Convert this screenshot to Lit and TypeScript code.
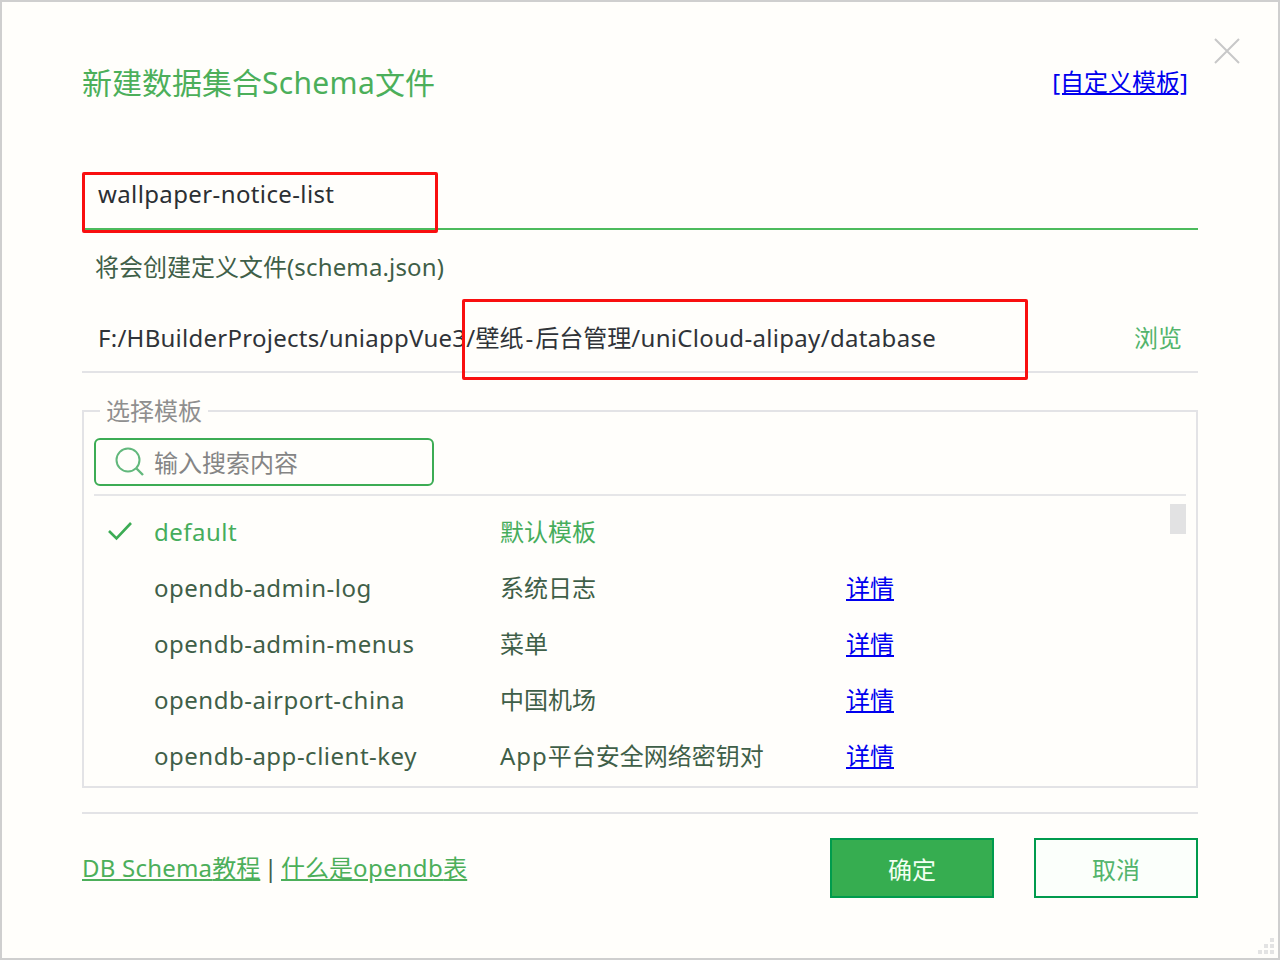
import { LitElement, html, css, svg } from "lit";
import { customElement } from "lit/decorators.js";

const rows = [
  { name: "default", desc: html`默认模板`, sel: true },
  { name: "opendb-admin-log", desc: html`系统日志` },
  { name: "opendb-admin-menus", desc: html`菜单` },
  { name: "opendb-airport-china", desc: html`中国机场` },
  { name: "opendb-app-client-key", desc: html`<span class="ls1">App</span>平台安全网络密钥对` },
];

@customElement("app-root")
export class AppRoot extends LitElement {
  static styles = css`
    :host {
      display: block;
      position: relative;
      box-sizing: border-box;
      width: 1280px;
      height: 960px;
      background: #fffefb;
      border: 2px solid #cfcfcf;
      padding: 61px 80px 0;
      font-family: "Noto Sans", "Noto Sans CJK SC", sans-serif;
      font-size: 24px;
      color: #3f5f48;
      overflow: hidden;
    }
    .ls1 { letter-spacing: 1px; }
    .ls5 { letter-spacing: 0.5px; }
    .ls3 { letter-spacing: 0.3px; }
    .ls26 { letter-spacing: 0.26px; }
    .ls15 { letter-spacing: 0.15px; }
    .ls32 { letter-spacing: 0.32px; }
    .dash { padding: 0 2px; }
    .head { display: flex; justify-content: space-between; align-items: center; height: 40px; }
    .title { font-size: 30px; line-height: 40px; color: #4caf5a; }
    .tpl { margin-right: 10px; padding-bottom: 2px; color: #0000ee; text-decoration: underline; line-height: 40px; }
    .close { position: absolute; left: 1212px; top: 36px; width: 26px; height: 26px; }
    .name {
      box-sizing: border-box;
      margin-top: 57px;
      height: 70px;
      border-bottom: 2px solid #4cbb5c;
      padding: 14px 16px 0;
      line-height: 40px;
      letter-spacing: 0.38px;
      color: #2b2f33;
    }
    .hint { margin-top: 17px; padding-left: 13px; line-height: 40px; }
    .path {
      box-sizing: border-box;
      margin-top: 31px;
      height: 55px;
      display: flex;
      justify-content: space-between;
      padding: 0 16px;
      border-bottom: 2px solid #e3e3e6;
      line-height: 40px;
      color: #2f3338;
    }
    .browse { color: #53b46c; }
    fieldset {
      box-sizing: border-box;
      margin: 24px 0 0;
      padding: 13px 10px 0;
      height: 391px;
      min-width: 0;
      border: 2px solid #e3e3e6;
    }
    legend { margin-left: 6px; padding: 0 6px; line-height: 28px; color: #8f8f8f; }
    .search {
      box-sizing: border-box;
      width: 340px;
      height: 48px;
      border: 2px solid #3cac54;
      border-radius: 6px;
      display: flex;
      align-items: center;
      gap: 8px;
      padding-left: 18px;
      color: #858585;
    }
    .search svg { width: 32px; height: 32px; flex: none; }
    .search span { padding-bottom: 2px; }
    .list {
      position: relative;
      margin-top: 8px;
      height: 290px;
      box-sizing: border-box;
      border-top: 2px solid #e6e6e8;
      padding-top: 8px;
      overflow: hidden;
    }
    .thumb { position: absolute; right: 0; top: 8px; width: 16px; height: 30px; background: #e2e2e3; }
    .row {
      box-sizing: border-box;
      display: grid;
      grid-template-columns: 60px 346px 346px auto;
      height: 56px;
      padding-bottom: 2px;
      align-items: center;
    }
    .row.sel { color: #46ad5c; }
    .row svg { display: block; margin-left: 13px; width: 26px; height: 24px; }
    .row .desc, .row a { padding-bottom: 2px; }
    .row a { color: #0000ee; text-decoration: underline; }
    .rule { margin-top: 24px; height: 2px; background: #e3e3e6; }
    .foot { display: flex; justify-content: space-between; align-items: center; margin-top: 24px; }
    .links { word-spacing: -2.5px; padding-bottom: 4px; }
    .links a { color: #4caf5a; text-decoration: underline; word-spacing: 0; }
    .db { letter-spacing: 0.22px; }
    .btns { display: flex; gap: 40px; }
    .btn {
      box-sizing: border-box;
      width: 164px;
      height: 60px;
      display: flex;
      align-items: center;
      justify-content: center;
      border: 2px solid #009b4d;
    }
    .ok { background: #36ad50; color: #f2fff2; }
    .no { background: #fbfffb; color: #53b46c; }
    .mark { position: absolute; border: 3px solid #f90f0f; border-radius: 2px; box-sizing: border-box; }
    .m1 { left: 80px; top: 170px; width: 356px; height: 61px; }
    .m2 { left: 460px; top: 297px; width: 566px; height: 81px; }
    .grip { position: absolute; left: 1256px; top: 936px; width: 16px; height: 16px; }
  `;

  render() {
    return html`
      <div class="head">
        <div class="title">新建数据集合<span class="ls3">Schema</span>文件</div>
        <a class="tpl">[自定义模板]</a>
      </div>
      <svg class="close" viewBox="0 0 26 26"><path d="M1 1L25 25M25 1L1 25" stroke="#c8c8c8" stroke-width="2" fill="none"/></svg>
      <div class="name">wallpaper-notice-list</div>
      <div class="hint">将会创建定义文件<span class="ls15">(schema.json)</span></div>
      <div class="path">
        <span><span class="ls26">F:/HBuilderProjects/uniappVue3/</span>壁纸<span class="dash">-</span>后台管理<span class="ls32">/uniCloud-alipay/database</span></span>
        <span class="browse">浏览</span>
      </div>
      <fieldset>
        <legend>选择模板</legend>
        <div class="search">
          <svg viewBox="0 0 32 32"><circle cx="14" cy="14" r="11.5" stroke="#62b87c" stroke-width="2" fill="none"/><path d="M22.5 22.5L29 29" stroke="#62b87c" stroke-width="2.4" fill="none"/></svg>
          <span>输入搜索内容</span>
        </div>
        <div class="list">
          ${rows.map(
            (r) => html`<div class="row ${r.sel ? "sel" : ""}">
              <span>${r.sel ? html`<svg viewBox="0 0 26 24"><path d="M2 12L9.5 19.5L24 4" stroke="#3cac54" stroke-width="2.6" fill="none"/></svg>` : ""}</span>
              <span class="ls5">${r.name}</span>
              <span class="desc">${r.desc}</span>
              ${r.sel ? "" : html`<a>详情</a>`}
            </div>`
          )}
          <div class="thumb"></div>
        </div>
      </fieldset>
      <div class="rule"></div>
      <div class="foot">
        <div class="links"><a><span class="db">DB Schema</span>教程</a> | <a>什么是<span class="ls5">opendb</span>表</a></div>
        <div class="btns">
          <div class="btn ok">确定</div>
          <div class="btn no">取消</div>
        </div>
      </div>
      <div class="mark m1"></div>
      <div class="mark m2"></div>
      <svg class="grip" viewBox="0 0 16 16" fill="#e3e3e3">
        ${svg`<rect x="12" y="0" width="4" height="4"/><rect x="6" y="6" width="4" height="4"/><rect x="12" y="6" width="4" height="4"/><rect x="0" y="12" width="4" height="4"/><rect x="6" y="12" width="4" height="4"/><rect x="12" y="12" width="4" height="4"/>`}
      </svg>
    `;
  }
}
